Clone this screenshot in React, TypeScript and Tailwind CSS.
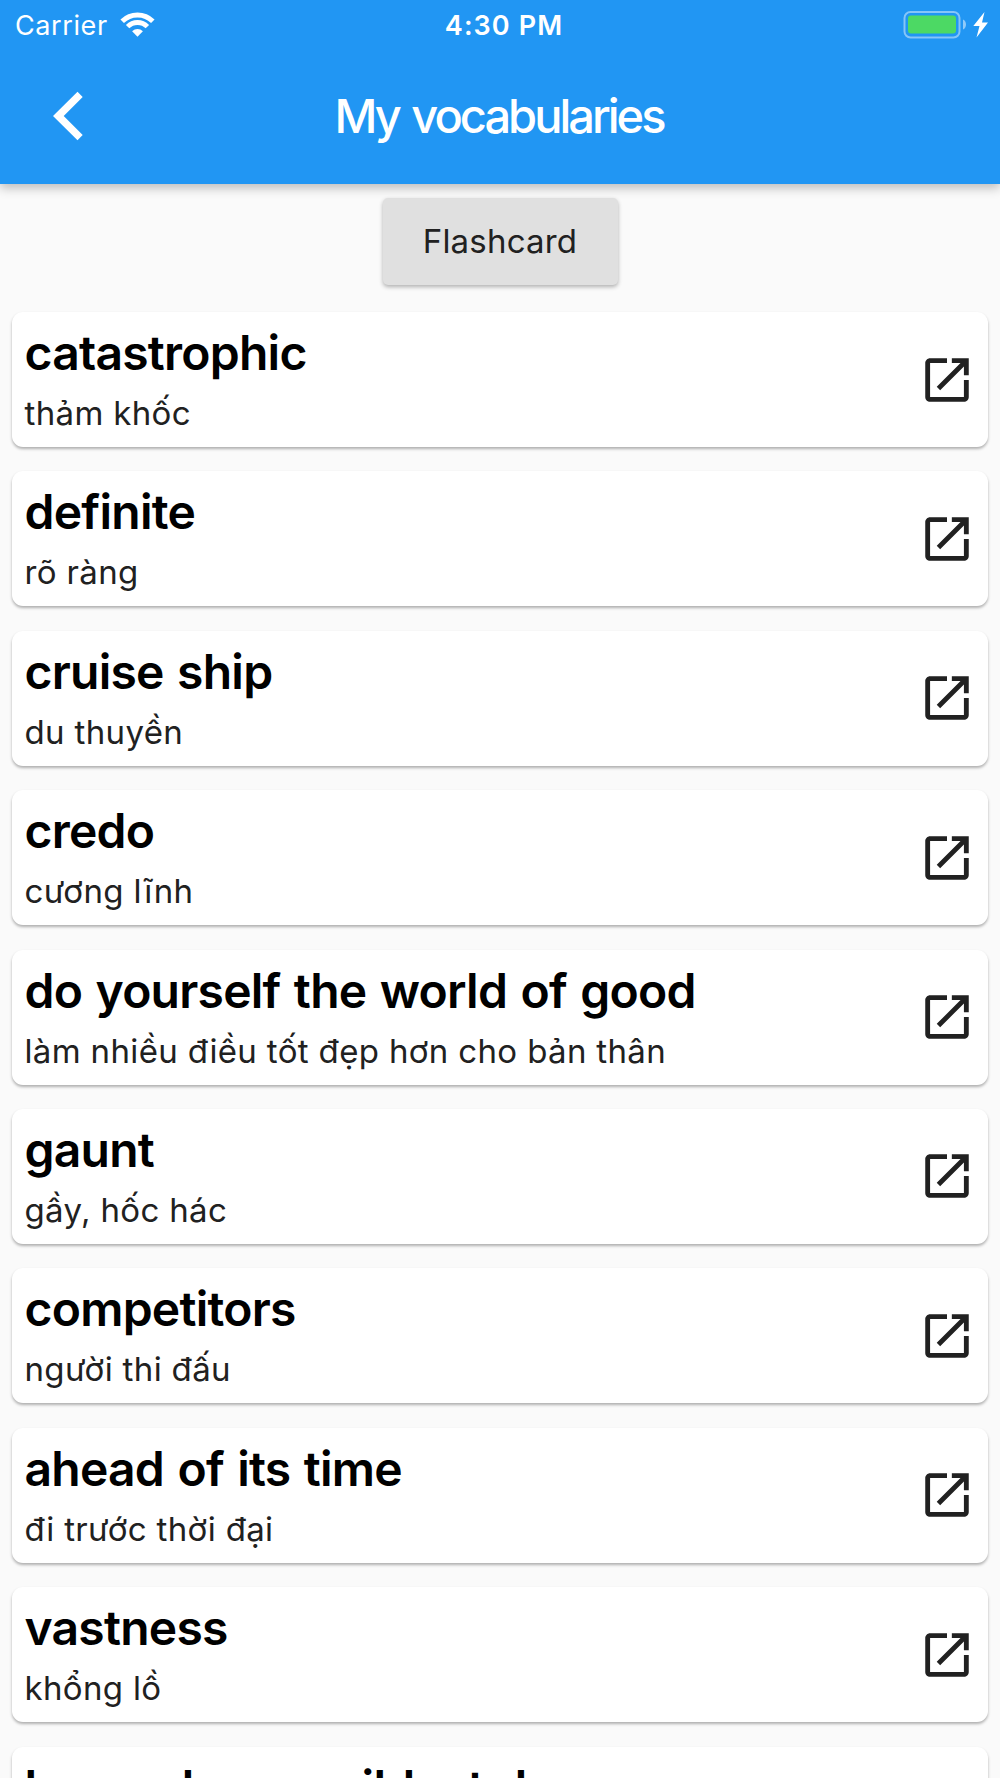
import React from "react";

const vocabularies = [
  { word: "catastrophic", meaning: "thảm khốc" },
  { word: "definite", meaning: "rõ ràng" },
  { word: "cruise ship", meaning: "du thuyền" },
  { word: "credo", meaning: "cương lĩnh" },
  { word: "do yourself the world of good", meaning: "làm nhiều điều tốt đẹp hơn cho bản thân" },
  { word: "gaunt", meaning: "gầy, hốc hác" },
  { word: "competitors", meaning: "người thi đấu" },
  { word: "ahead of its time", meaning: "đi trước thời đại" },
  { word: "vastness", meaning: "khổng lồ" },
  { word: "beyond your wildest dreams", meaning: "" },
];

function StatusBar() {
  return (
    <div className="flex h-[50px] items-center justify-between pl-[15px] pr-[12px] text-[27px] leading-none">
      <div className="flex flex-1 items-center gap-[12px]">
        <span className="tracking-[0.6px]">Carrier</span>
        <svg width="35" height="26" viewBox="0 0 35 26" fill="none" stroke="white">
          <path d="M2.200 9.200a21.700 21.700 0 0 1 30.600 0" strokeWidth="5" />
          <path d="M7.600 14.600a14 14 0 0 1 19.800 0" strokeWidth="4.8" />
          <path d="M17.500 24.800l-5.400-5.600a8 8 0 0 1 10.800 0z" fill="white" stroke="none" />
        </svg>
      </div>
      <span className="pl-[5px] pt-px font-semibold tracking-[1.1px]">4:30 PM</span>
      <div className="flex flex-1 justify-end">
        <svg width="86" height="28" viewBox="0 0 86 28">
          <rect x="2.500" y="1" width="55" height="25.500" rx="6" fill="none" stroke="white" strokeOpacity="0.45" strokeWidth="2" />
          <rect x="6" y="4.500" width="48" height="18" rx="3" fill="#4cd964" />
          <path d="M61 8.500c4 1.500 4 8.500 0 10z" fill="white" fillOpacity="0.5" />
          <path d="M82.500 1L71.300 15h6.200L74.500 26.500 86 11.500h-6z" fill="white" />
        </svg>
      </div>
    </div>
  );
}

function OpenIcon() {
  return (
    <svg width="58" height="58" viewBox="0 0 24 24" fill="#212121">
      <path d="M19 19H5V5h7V3H5c-1.110 0-2 .9-2 2v14c0 1.100.89 2 2 2h14c1.100 0 2-.9 2-2v-7h-2v7zM14 3v2h3.590l-9.830 9.830 1.410 1.410L19 6.410V10h2V3h-7z" />
    </svg>
  );
}

export default function App() {
  return (
    <div className="flex h-[1778px] w-[1000px] flex-col overflow-hidden bg-[#fafafa] font-['Inter',sans-serif]">
      <header className="relative h-[183.500px] shrink-0 bg-[#2196f3] text-white shadow-[0_4px_10px_rgba(0,0,0,0.25)]">
        <StatusBar />
        <div className="grid h-[133px] grid-cols-[1fr_auto_1fr] items-center">
          <button className="ml-[52px] w-fit" aria-label="Back">
            <svg width="32" height="51" viewBox="0 0 32 51" fill="white">
              <path d="M1 25L25.500 0.700l5.200 5.200L11.700 25l19 19.100-5.200 5.200z" />
            </svg>
          </button>
          <h1 className="pr-[2px] text-[47px] font-[550] tracking-[-3px] [word-spacing:3px]">My vocabularies</h1>
        </div>
      </header>

      <main className="flex flex-col px-3 pt-[14px]">
        <button className="h-[87px] w-[235px] self-center rounded-[5px] bg-[#e0e0e0] pt-px text-[33px] tracking-[0.2px] text-[#212121] shadow-[0_2px_4px_rgba(0,0,0,0.3)]">
          Flashcard
        </button>
        <ul className="mt-[27.500px] flex flex-col gap-[24.400px]">
          {vocabularies.map((item) => (
            <li
              key={item.word}
              className="flex h-[135px] items-center justify-between rounded-[11px] bg-white pl-[12.500px] pr-[12px] shadow-[0_2px_3px_rgba(0,0,0,0.3)]"
            >
              <div className="h-full whitespace-nowrap pt-[11px]">
                <h2 className="text-[48px] font-semibold leading-[60px] tracking-[-0.75px] text-black [word-spacing:2px]">
                  {item.word}
                </h2>
                <p className="mt-[8px] text-[33px] leading-[44px] tracking-[0.35px] text-[#212121]">{item.meaning}</p>
              </div>
              <OpenIcon />
            </li>
          ))}
        </ul>
      </main>
    </div>
  );
}
